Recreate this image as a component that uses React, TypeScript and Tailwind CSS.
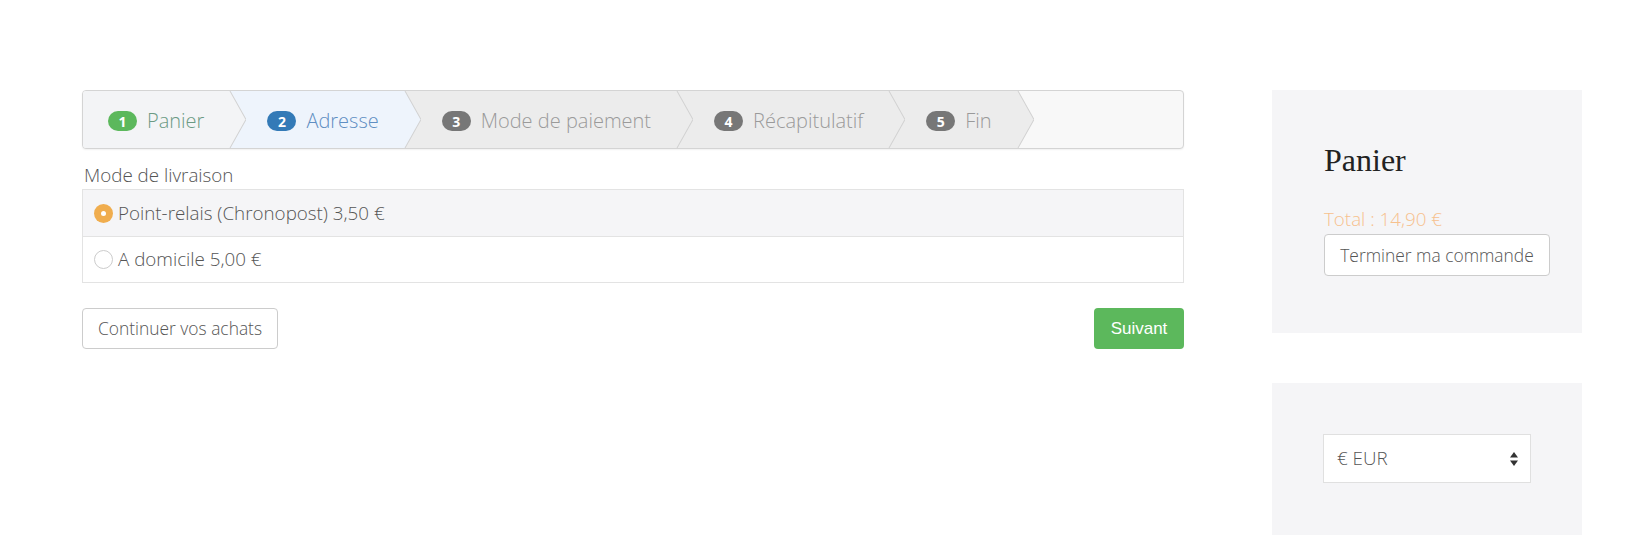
import React from "react";

const sans = { fontFamily: '"Open Sans", "Noto Sans", sans-serif' };

type Step = { n: number; label: string; badge: string; text: string; bg: string };

const steps: Step[] = [
  { n: 1, label: "Panier", badge: "bg-[#5cb85c]", text: "text-[#6b9a84]", bg: "#f3f4f6" },
  { n: 2, label: "Adresse", badge: "bg-[#337ab7]", text: "text-[#5f8ec2]", bg: "#eef4fc" },
  { n: 3, label: "Mode de paiement", badge: "bg-[#777777]", text: "text-[#9a9a9a]", bg: "#ececec" },
  { n: 4, label: "Récapitulatif", badge: "bg-[#777777]", text: "text-[#9a9a9a]", bg: "#ececec" },
  { n: 5, label: "Fin", badge: "bg-[#777777]", text: "text-[#9a9a9a]", bg: "#ececec" },
];

function Chevron({ fill }: { fill: string }) {
  return (
    <svg
      className="absolute top-0 right-[-16px] h-full w-[17px] z-10"
      viewBox="0 0 17 56"
      preserveAspectRatio="none"
    >
      <polygon points="0,0 1,0 17,28 1,56 0,56" fill={fill} />
      <polyline points="1,0 17,28 1,56" fill="none" stroke="#d2d2d2" strokeWidth="1" />
    </svg>
  );
}

function Wizard() {
  return (
    <div className="flex h-[59px] rounded border border-[#d4d4d4] bg-[#f8f8f8] shadow-[0_1px_2px_rgba(0,0,0,0.06)] overflow-hidden">
      {steps.map((s, i) => (
        <div
          key={s.n}
          className={`relative flex items-center gap-[10px] pt-[3px] pr-[26px] ${i === 0 ? "pl-[25px]" : "pl-[37px]"}`}
          style={{ backgroundColor: s.bg, zIndex: 10 - i }}
        >
          <span
            className={`${s.badge} flex h-[20px] w-[29px] items-center justify-center rounded-full text-[14px] font-bold text-white`}
          >
            {s.n}
          </span>
          <span className={`${s.text} text-[20px] font-light whitespace-nowrap`}>{s.label}</span>
          <Chevron fill={s.bg} />
        </div>
      ))}
    </div>
  );
}

function Radio({ checked }: { checked?: boolean }) {
  if (checked) {
    return (
      <span className="flex h-[19px] w-[19px] items-center justify-center rounded-full bg-[#f0ad4e]">
        <span className="h-[5px] w-[5px] rounded-full bg-white" />
      </span>
    );
  }
  return <span className="h-[19px] w-[19px] rounded-full border border-[#cccccc] bg-white" />;
}

export default function App() {
  return (
    <div className="min-h-[552px] bg-white text-[#555555] font-light" style={sans}>
      <div className="flex gap-[88px] pl-[82px] pt-[90px]">
        {/* ── Main column ─────────────────────────── */}
        <div className="w-[1102px]">
          <Wizard />

          <p className="mt-[13px] mb-px text-[18.8px] leading-[26px] pl-[2px]">Mode de livraison</p>

          <div className="border-t border-x border-[#e3e3e3]">
            <label className="flex h-[47px] items-center gap-[5px] border-b border-[#e3e3e3] bg-[#f5f5f7] pl-[11px] text-[18.8px]">
              <Radio checked />
              <span>Point-relais (Chronopost) 3,50 €</span>
            </label>
            <label className="flex h-[46px] items-center gap-[5px] border-b border-[#e3e3e3] bg-white pl-[11px] text-[18.8px]">
              <Radio />
              <span>A domicile 5,00 €</span>
            </label>
          </div>

          <div className="mt-[25px] flex items-center justify-between">
            <button className="h-[41px] w-[196px] rounded border border-[#cccccc] bg-white text-[17.4px] font-light text-[#555555]">
              Continuer vos achats
            </button>
            <button
              className="h-[41px] w-[90px] rounded bg-[#5cb85c] text-[17px] font-normal text-white"
              style={{ fontFamily: '"Liberation Sans", Arial, sans-serif' }}
            >
              Suivant
            </button>
          </div>
        </div>

        {/* ── Sidebar ─────────────────────────────── */}
        <div className="w-[310px]">
          <div className="h-[243px] bg-[#f5f5f7] pl-[52px] pt-[51px]">
            <h2
              className="text-[32px] font-normal leading-[1.2] text-[#222222]"
              style={{ fontFamily: '"Liberation Serif", "Times New Roman", serif' }}
            >
              Panier
            </h2>
            <p className="mt-[27px] text-[18.8px] leading-[26px] text-[#f7c18e]">Total : 14,90 €</p>
            <button className="mt-[2px] h-[42px] w-[226px] rounded border border-[#cccccc] bg-white text-[17.4px] font-light text-[#555555]">
              Terminer ma commande
            </button>
          </div>

          <div className="mt-[50px] bg-[#f5f5f7] pl-[51px] pt-[51px] pb-[52px]">
            <div className="flex h-[49px] w-[208px] items-center justify-between border border-[#e0e0e0] bg-white pl-[13px] pr-[12px] text-[18.8px]">
              <span>€ EUR</span>
              <svg width="8" height="14" viewBox="0 0 8 14">
                <polygon points="4,0 8,5.5 0,5.5" fill="#333333" />
                <polygon points="0,8.5 8,8.5 4,14" fill="#333333" />
              </svg>
            </div>
          </div>
        </div>
      </div>
    </div>
  );
}
